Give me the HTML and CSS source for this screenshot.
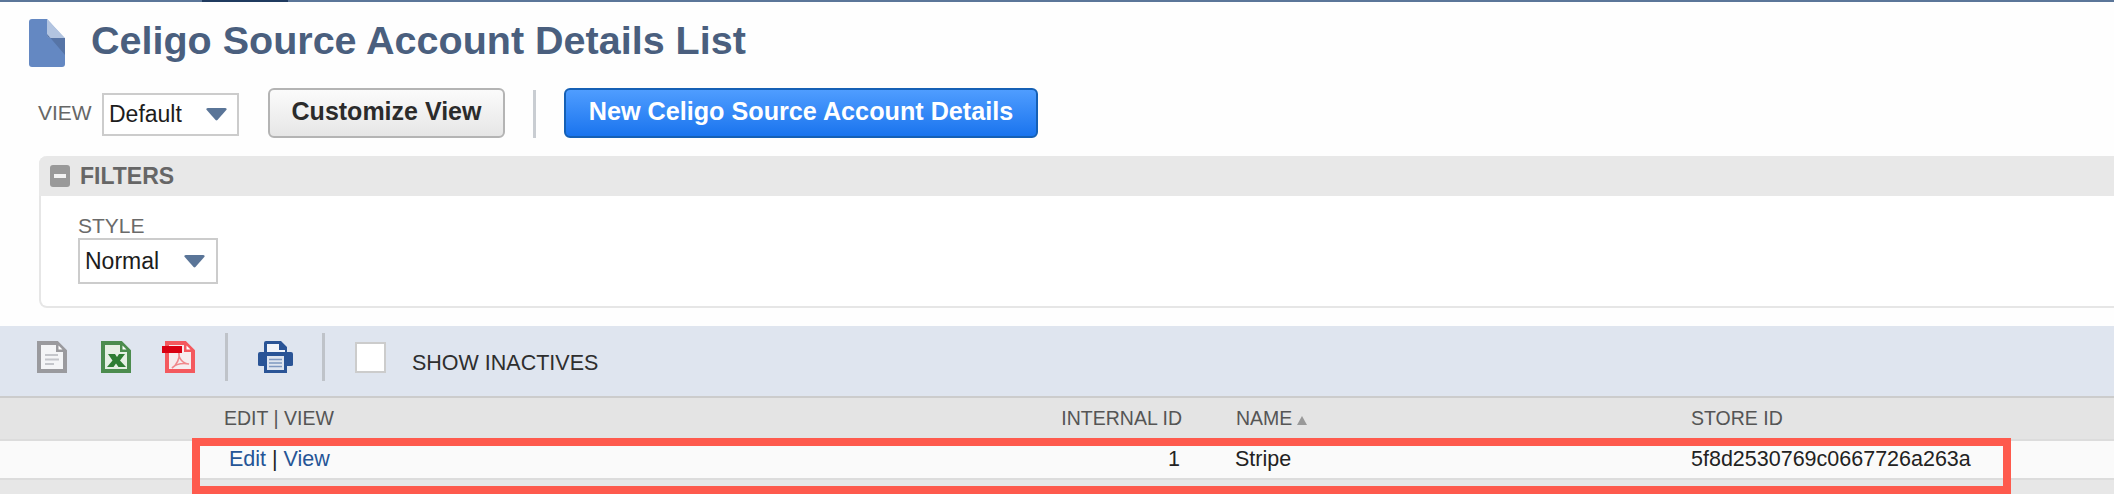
FILE: index.html
```html
<!DOCTYPE html>
<html lang="en">
<head>
<meta charset="utf-8">
<title>Celigo Source Account Details List</title>
<link rel="stylesheet" href="styles.css">
</head>
<body>
<div class="topbar"><div class="topbar-active"></div></div>
<header class="title-row">
  <svg class="page-icon" viewBox="0 0 36 48" aria-hidden="true">
    <path d="M3 0H18L36 20V45a3 3 0 0 1-3 3H3a3 3 0 0 1-3-3V3a3 3 0 0 1 3-3Z" fill="#6488c2"/>
    <path d="M18 0L36 19H22a4 4 0 0 1-4-4Z" fill="#b2c4e0"/>
    <path d="M18 15a4 4 0 0 0 4 4H36V36Z" fill="#5674a6"/>
  </svg>
  <h1 class="title">Celigo Source Account Details List</h1>
</header>
<div class="view-row">
  <span class="view-label">VIEW</span>
  <div class="select select-view"><span>Default</span><svg class="caret" viewBox="0 0 22 14"><path d="M0 1.500Q0 0 2 0H20Q22 0 22 1.500L12 13Q11 14 10 13Z"/></svg></div>
  <button class="btn btn-gray">Customize View</button>
  <div class="vsep"></div>
  <button class="btn btn-blue">New Celigo Source Account Details</button>
</div>
<section class="filters">
  <div class="filters-head">
    <span class="minus"><span class="minus-bar"></span></span>
    <span class="filters-title">FILTERS</span>
  </div>
  <div class="filters-body">
    <div class="field-label">STYLE</div>
    <div class="select select-style"><span>Normal</span><svg class="caret" viewBox="0 0 22 14"><path d="M0 1.500Q0 0 2 0H20Q22 0 22 1.500L12 13Q11 14 10 13Z"/></svg></div>
  </div>
</section>
<div class="toolbar">
  <svg class="tool tool-doc" viewBox="0 0 30 32" aria-hidden="true">
    <path d="M2 2H20L28 10V30H2Z" fill="#f4f5f7" stroke="#9a9a9e" stroke-width="4"/>
    <path d="M19 0V11H30Z" fill="#9a9a9e"/><path d="M21.500 4.500V8.500H25.500Z" fill="#fff"/>
    <path d="M8 14H21M8 18.500H22M8 23H17" stroke="#c4c6cb" stroke-width="2"/>
  </svg>
  <svg class="tool tool-xls" viewBox="0 0 30 32" aria-hidden="true">
    <path d="M2 2H20L28 10V30H2Z" fill="#e6efe4" stroke="#4c8c4e" stroke-width="4"/>
    <path d="M19 0V11H30Z" fill="#4c8c4e"/><path d="M21.500 4.500V8.500H25.500Z" fill="#fff"/>
    <path d="M7 13H14L16 16L18 13H24L19 19.500L25 26H17.500L15 22.500L12.500 26H6L11.500 19.500Z" fill="#2f7d33"/>
  </svg>
  <svg class="tool tool-pdf" viewBox="0 0 30 32" aria-hidden="true">
    <path d="M2 2H20L28 10V30H2Z" fill="#f6ecee" stroke="#f4595e" stroke-width="4"/>
    <path d="M19 0V11H30Z" fill="#f4595e"/><path d="M21.500 4.500V8.500H25.500Z" fill="#fff"/>
    <path d="M7 27C12 24 15 17 14 11C13 17 18 23 24 23C18 22 11 23 7 27Z" fill="none" stroke="#f0888c" stroke-width="1.600"/>
    <rect x="-3" y="5" width="20" height="7" fill="#d90012"/>
  </svg>
  <div class="tool-sep"></div>
  <svg class="tool tool-print" viewBox="0 0 35 32" aria-hidden="true">
    <path d="M8 0H23L29 6V11H33Q35 11 35 13V24Q35 25 33 25H29V32H6V25H2Q0 25 0 24V13Q0 11 2 11H6V2Q6 0 8 0Z" fill="#2a5496"/>
    <path d="M9 3H21V9H27V11H9Z" fill="#f1f4fa"/>
    <rect x="9" y="15" width="17" height="14" fill="#dfe5ef"/>
    <path d="M11 18.500H24M11 22H24M11 25.500H24" stroke="#7f98c0" stroke-width="1.500"/>
  </svg>
  <div class="tool-sep tool-sep-b"></div>
  <span class="checkbox"></span>
  <span class="show-label">SHOW INACTIVES</span>
</div>
<div class="results">
  <div class="grid head">
    <div>EDIT | VIEW</div>
    <div class="c-id">INTERNAL ID</div>
    <div class="c-name">NAME<span class="sort"></span></div>
    <div>STORE ID</div>
  </div>
  <div class="grid row">
    <div class="c-links"><a href="#">Edit</a> | <a href="#">View</a></div>
    <div class="c-id c-id-val">1</div>
    <div class="c-name c-name-val">Stripe</div>
    <div>5f8d2530769c0667726a263a</div>
  </div>
  <div class="highlight"></div>
</div>
</body>
</html>
```
FILE: styles.css
```css
* { box-sizing: border-box; }
html, body { margin: 0; padding: 0; }
body {
  height: 494px;
  overflow: hidden;
  background: #fefefe;
  font-family: "Liberation Sans", Arial, sans-serif;
  color: #222;
}
.topbar { height: 2px; background: #5b7699; padding-left: 202px; }
.topbar-active { width: 86px; height: 2px; background: #1f3a5f; }

.title-row { display: flex; align-items: flex-start; height: 70px; padding: 17px 0 0 29px; }
.page-icon { width: 36px; height: 48px; flex: none; }
.title { margin: -1px 0 0 26px; font-size: 39.500px; line-height: 44px; font-weight: 700; color: #4a5f7e; }

.view-row { display: flex; align-items: center; height: 50px; padding-left: 38px; margin-top: 16px; }
.view-label { font-size: 21px; color: #666; width: 64px; margin-top: -1px; }
.select { display: flex; align-items: center; justify-content: space-between; background: #fff; border: 2px solid #ccc; font-size: 23px; color: #1c1c1c; }
.select-view { width: 137px; height: 43px; padding: 0 10px 0 5px; margin-top: 3px; }
.select-style { width: 140px; height: 46px; padding: 0 11px 0 5px; }
.caret { width: 21px; height: 13px; fill: #5a7598; }

.btn { font-family: inherit; font-weight: 700; border-radius: 6px; padding: 0; height: 50px; }
.btn-gray { width: 237px; margin-left: 29px; padding-bottom: 3px; font-size: 25px; color: #2b2b2b; background: linear-gradient(#fbfbfb, #e6e6e6); border: 2px solid #b4b4b4; }
.vsep { width: 3px; height: 48px; margin: 2px 0 0 28px; background: #c9cdd2; }
.btn-blue { width: 474px; margin-left: 28px; padding-bottom: 3px; font-size: 25.200px; color: #fff; background: linear-gradient(#4f9dff, #1a74ee); border: 2px solid #1560b5; }

.filters { margin: 18px -20px 0 39px; height: 152px; background: #fff; border: 2px solid #e6e6e6; border-top: 0; border-radius: 8px 0 0 8px; }
.filters-head { display: flex; align-items: center; height: 40px; margin-left: -2px; padding-left: 11px; background: #e8e8e8; border-radius: 8px 0 0 0; }
.minus { display: flex; align-items: center; justify-content: center; width: 20px; height: 22px; background: #999; border-radius: 3px; }
.minus-bar { width: 12px; height: 4px; background: #f2f2f2; }
.filters-title { margin-left: 10px; font-size: 23px; font-weight: 700; color: #666; }
.filters-body { padding: 18px 0 0 37px; }
.field-label { font-size: 21px; line-height: 24px; color: #6a6a6a; }

.toolbar { display: flex; align-items: center; height: 72px; margin-top: 18px; padding: 0 0 8px 37px; background: #dfe5ef; border-bottom: 2px solid #ccc; }
.tool { flex: none; width: 30px; height: 32px; overflow: visible; }
.tool + .tool { margin-left: 34px; }
.tool-sep { width: 3px; height: 48px; margin-left: 30px; background: #bfc3c9; }
.tool-print { width: 35px; margin-left: 30px; }
.tool-sep-b { margin-left: 29px; }
.checkbox { width: 31px; height: 31px; margin-left: 30px; background: #fff; border: 2px solid #ccc; }
.show-label { margin: 12px 0 0 26px; font-size: 21.500px; color: #2e2e2e; }

.results { position: relative; height: 96px; background: #e7e7e7; }
.grid { display: grid; grid-template-columns: 400px 558px 54px 455px 1fr; align-items: center; padding-left: 224px; }
.head { height: 43px; background: #e4e4e4; border-bottom: 2px solid #dcdcdc; padding-bottom: 1px; font-size: 19.500px; color: #555; }
.row { height: 39px; background: #fafafa; border-bottom: 2px solid #dcdcdc; font-size: 21.500px; color: #222; }
.c-links { margin-left: 5px; }
.c-links a { color: #255596; text-decoration: none; }
.c-id { justify-self: end; }
.c-id-val { margin-right: 2px; }
.c-name { grid-column: 4; }
.c-name-val { margin-left: -1px; }
.sort { display: inline-block; margin-left: 5px; border-left: 5px solid transparent; border-right: 5px solid transparent; border-bottom: 9px solid #999; }
.highlight { position: absolute; left: 192px; top: 40px; width: 1819px; height: 56px; border: 8px solid #fe5a4d; }
```
